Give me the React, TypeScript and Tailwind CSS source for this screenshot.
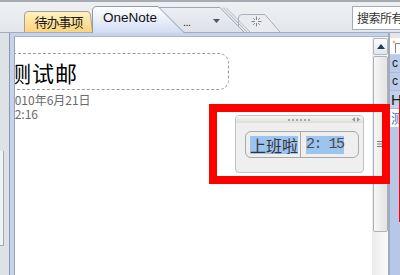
export default function App() {
  const cjk = "font-['Noto_Sans_CJK_SC',sans-serif]";
  return (
    <div className="w-[400px] h-[275px] overflow-hidden relative flex flex-col bg-[#e3e7ec] font-['Liberation_Sans','Noto_Sans_CJK_SC',sans-serif]">
      {/* tab strip */}
      <div className="h-[33px] shrink-0 flex items-end border-t-2 border-b border-t-[#a7abb1] border-b-[#a3acba] bg-gradient-to-b from-[#eef0f3] to-[#e3e7ec] pl-[24px]">
        {/* 待办事项 */}
        <div className="relative z-[1] w-[69px] h-[21px] shrink-0 flex items-center justify-center">
          <svg className="absolute inset-0" width="69" height="21" viewBox="0 0 69 21">
            <defs>
              <linearGradient id="ga" x1="0" y1="0" x2="0" y2="1">
                <stop offset="0" stopColor="#fff2c2" />
                <stop offset="1" stopColor="#fcd47a" />
              </linearGradient>
            </defs>
            <path d="M0.5 21 V4 Q0.5 0.5 4 0.5 H63 Q65.5 0.5 66.3 3 L68.5 21" fill="url(#ga)" stroke="#a8a190" />
          </svg>
          <span className={`relative text-[13px] tracking-[-1px] text-[#1a1a1a] leading-none ${cjk}`}>待办事项</span>
        </div>
        {/* OneNote */}
        <div className="relative z-[4] w-[93px] h-[27px] shrink-0 ml-[-1px] mb-[-1px] flex items-center pl-[11px] pb-[3px]">
          <svg className="absolute inset-0" width="93" height="27" viewBox="0 0 93 27">
            <defs>
              <linearGradient id="gb" x1="0" y1="0" x2="0" y2="1">
                <stop offset="0" stopColor="#ffffff" />
                <stop offset="1" stopColor="#d2ddf2" />
              </linearGradient>
            </defs>
            <path d="M0.5 27 V5 Q0.5 0.5 5 0.5 H66 L92.5 27" fill="url(#gb)" stroke="#8f99aa" />
          </svg>
          <span className="relative text-[13.5px] text-[#111] leading-none">OneNote</span>
        </div>
        {/* ... tab */}
        <div className="relative z-[3] w-[92px] h-[25px] shrink-0 ml-[-27px] flex items-center">
          <svg className="absolute inset-0" width="92" height="25" viewBox="0 0 92 25">
            <defs>
              <linearGradient id="gc" x1="0" y1="0" x2="0" y2="1">
                <stop offset="0" stopColor="#eceef1" />
                <stop offset="1" stopColor="#dde1e7" />
              </linearGradient>
            </defs>
            <path d="M0 25 V0.5 H62 L86 25 Z" fill="url(#gc)" />
            <path d="M0 0.5 H62 L86 25" fill="none" stroke="#9ea6b3" />
            <path d="M65 0.5 L89 25" fill="none" stroke="#a9b0bb" />
            <path d="M68 0.5 L92 25" fill="none" stroke="#b4bac4" />
            <path d="M55 12 H62 L58.5 16 Z" fill="#4d5460" />
          </svg>
          <span className="relative ml-[25px] mt-[6px] text-[11px] tracking-[-0.5px] text-[#222] leading-none">...</span>
        </div>
        {/* new section tab */}
        <div className="relative z-[2] w-[42px] h-[18px] shrink-0 ml-[-12px]">
          <svg className="absolute inset-0" width="42" height="18" viewBox="0 0 42 18">
            <path d="M0.5 18 V4 Q0.5 0.5 4 0.5 H27 L42 18" fill="#e9ebef" stroke="#a8afba" />
            <g stroke="#7d8288" strokeWidth="1" strokeLinecap="round">
              <path d="M18.5 3 V5.5" />
              <path d="M18.5 9.5 V12" />
              <path d="M14 7.5 H16.5" />
              <path d="M20.5 7.5 H23" />
              <path d="M15.5 4.5 L16.5 5.5" />
              <path d="M21.5 4.5 L20.5 5.5" />
              <path d="M15.5 10.5 L16.5 9.5" />
              <path d="M21.5 10.5 L20.5 9.5" />
            </g>
          </svg>
        </div>
        {/* search */}
        <div className={`self-start mt-[4px] ml-[72px] w-[60px] h-[24px] shrink-0 bg-white border border-[#a3acbb] flex items-center pl-[4px] text-[12px] tracking-[-0.5px] text-[#333] whitespace-nowrap overflow-hidden ${cjk}`}>
          搜索所有
        </div>
      </div>

      {/* main area */}
      <div className="flex-1 flex min-h-0">
        {/* left column */}
        <div className="w-[9px] shrink-0 bg-[#dee2e7] flex flex-col">
          <div className="mt-[118px] h-[95px] w-[4px] bg-[#eef1f6] border-r border-b border-[#a3a9b1]" />
        </div>
        {/* frame */}
        <div className="flex-1 flex flex-col border-l border-[#8e98a7] bg-[#c6d3ee] pt-[3px] pl-[4px] min-w-0">
          <div className="flex-1 flex border-t border-[#a9b6cc] min-h-0">
            {/* page */}
            <div className="flex-1 bg-white border-l border-[#98a4b7] overflow-hidden">
              <div className="ml-[-7px] pt-[16px]">
                <div className={`ml-[-5px] w-[226px] h-[37px] border border-dashed border-[#9c9c9c] rounded-[10px] flex items-center pl-[5px] text-[22px] tracking-[1px] text-black leading-none ${cjk}`}>
                  测试邮
                </div>
                <div className={`mt-[3px] text-[12px] leading-[14px] text-[#6b6b6b] ${cjk}`}>2010年6月21日</div>
                <div className={`text-[12px] leading-[14px] text-[#6b6b6b] ${cjk}`}>12:16</div>
              </div>
            </div>
            {/* scrollbar */}
            <div className="w-[16px] shrink-0 pl-[1px] flex flex-col bg-gradient-to-r from-[#ebebeb] to-[#fafafa]">
              <div className="mt-[1px] h-[17px] rounded-[2px] border border-[#b2b8c1] bg-gradient-to-b from-[#fbfbfb] to-[#e4e6ea] flex items-center justify-center">
                <svg width="8" height="5" viewBox="0 0 8 5">
                  <path d="M0 5 L4 0 L8 5 Z" fill="#243a5c" />
                </svg>
              </div>
              <div className="mt-[1px] h-[176px] rounded-[2px] border border-[#adb2ba] bg-gradient-to-r from-[#f7f7f7] to-[#e3e3e3] flex items-center justify-center">
                <svg width="7" height="6" viewBox="0 0 7 6">
                  <path d="M0 0.5 H7 M0 3 H7 M0 5.5 H7" stroke="#7a7a7a" strokeWidth="1" />
                </svg>
              </div>
            </div>
          </div>
        </div>
        {/* right panel */}
        <div className="w-[12px] shrink-0 flex flex-col border-l-2 border-[#a2abb8] bg-[#b7c7e7]">
          <div className="h-[5px] bg-[#e3e7ec]" />
          <div className="h-[17px] bg-white border-b border-[#c9d3e3] relative">
            <svg className="absolute left-[2px] top-[2px]" width="8" height="13" viewBox="0 0 8 13">
              <path d="M3.5 3.5 H8 M3.5 3.5 V13" stroke="#7b8594" fill="none" />
              <path d="M2 0 L2.6 1.5 L4 2 L2.6 2.5 L2 4 L1.4 2.5 L0 2 L1.4 1.5 Z" fill="#f0a020" />
            </svg>
          </div>
          <div className="h-[18px] bg-[#bccbea] border-b border-[#a9badc] text-[12px] text-[#1c1c1c] leading-[17px] pl-[2px]">c</div>
          <div className="h-[18px] bg-[#bccbea] border-b border-[#a9badc] text-[12px] text-[#1c1c1c] leading-[17px] pl-[2px]">c</div>
          <div className="h-[18px] bg-[#c3d1ec] border-b border-[#a9badc] text-[15px] text-[#1c1c1c] leading-[17px] pl-[1px]">H</div>
          <div className={`h-[18px] bg-white text-[13px] text-[#3d6cc0] leading-[17px] pl-[1px] ${cjk}`}>测</div>
        </div>
      </div>

      {/* floating widget */}
      <div className="absolute left-[235px] top-[115px] w-[129px] h-[58px] rounded-[4px] border border-[#c3c3c3] bg-[#efefef] flex flex-col overflow-hidden">
        <div className="h-[7px] shrink-0 bg-gradient-to-b from-[#f7f7f5] to-[#dcddd9] flex items-center relative">
          <div className="ml-[52px] flex gap-[2px]">
            <div className="w-[2px] h-[2px] bg-[#aaa]" />
            <div className="w-[2px] h-[2px] bg-[#aaa]" />
            <div className="w-[2px] h-[2px] bg-[#aaa]" />
            <div className="w-[2px] h-[2px] bg-[#aaa]" />
            <div className="w-[2px] h-[2px] bg-[#aaa]" />
            <div className="w-[2px] h-[2px] bg-[#aaa]" />
          </div>
          <svg className="ml-auto mr-[3px]" width="8" height="5" viewBox="0 0 8 5">
            <path d="M3 0 L0 2.5 L3 5 Z M5 0 L8 2.5 L5 5 Z" fill="#999" />
          </svg>
        </div>
        <div className="mt-[8px] ml-[9px] w-[114px] h-[27px] rounded-[6px] border border-[#a9a9a9] flex items-center">
          <div className="w-[55px] h-full border-r border-[#a9a9a9] flex items-center pl-[4px]">
            <span className={`bg-[#9dc4ee] h-[18px] leading-[18px] text-[16px] text-[#333] ${cjk}`}>上班啦</span>
          </div>
          <div className="pl-[5px] flex items-center">
            <span className="bg-[#9dc4ee] h-[18px] leading-[18px] text-[15px] tracking-[-1.5px] text-[#4a4a4a] font-['Liberation_Mono',monospace] whitespace-pre">2: 15</span>
          </div>
        </div>
      </div>

      {/* annotation */}
      <div className="absolute left-[209px] top-[104px] w-[181px] h-[80px] border-8 border-[#ff0000]" />
      <div className="absolute left-[399px] top-[104px] w-[1px] h-[118px] bg-[#ff0000]" />
    </div>
  );
}
